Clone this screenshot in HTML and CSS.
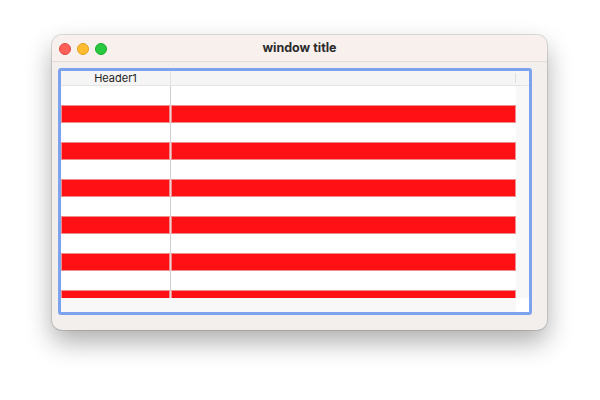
FILE: index.html
```html
<!DOCTYPE html>
<html>
<head>
<meta charset="utf-8">
<link rel="stylesheet" href="styles.css">
</head>
<body>
<div class="window">
  <div class="titlebar">
    <div class="lights">
      <span class="light red"></span>
      <span class="light yellow"></span>
      <span class="light green"></span>
    </div>
    <div class="title">window title</div>
    <div></div>
  </div>
  <div class="content">
    <div class="ring">
      <div class="scroll">
        <div class="header">
          <div class="hcell c1">Header1</div>
          <div class="hcell c2"></div>
          <div class="hcell c3"></div>
        </div>
        <div class="body">
          <div class="row"><div class="cell c1"></div><div class="cell c2"></div></div>
          <div class="row hot"><div class="cell c1"></div><div class="cell c2"></div></div>
          <div class="row"><div class="cell c1"></div><div class="cell c2"></div></div>
          <div class="row hot"><div class="cell c1"></div><div class="cell c2"></div></div>
          <div class="row"><div class="cell c1"></div><div class="cell c2"></div></div>
          <div class="row hot"><div class="cell c1"></div><div class="cell c2"></div></div>
          <div class="row"><div class="cell c1"></div><div class="cell c2"></div></div>
          <div class="row hot"><div class="cell c1"></div><div class="cell c2"></div></div>
          <div class="row"><div class="cell c1"></div><div class="cell c2"></div></div>
          <div class="row hot"><div class="cell c1"></div><div class="cell c2"></div></div>
          <div class="row"><div class="cell c1"></div><div class="cell c2"></div></div>
          <div class="row hot"><div class="cell c1"></div><div class="cell c2"></div></div>
        </div>
        <div class="vscroll"></div>
        <div class="hscroll"></div>
        <div class="corner"></div>
      </div>
    </div>
  </div>
</div>
</body>
</html>
```

FILE: styles.css
```css
html, body {
  margin: 0;
  padding: 0;
  background: #ffffff;
}

body {
  box-sizing: border-box;
  min-height: 400px;
  padding: 35px 0 0 52px;
  font-family: "Inter", "Liberation Sans", sans-serif;
}

.window {
  width: 495px;
  height: 295px;
  border-radius: 10px;
  background: #f3efec;
  box-shadow: 0 12px 26px rgba(0, 0, 0, 0.32), 0 0 0 1px rgba(0, 0, 0, 0.12);
  overflow: hidden;
  display: flex;
  flex-direction: column;
}

.titlebar {
  height: 26px;
  flex: none;
  background: #f7f0ed;
  border-bottom: 1px solid #e3dcd8;
  display: grid;
  grid-template-columns: 1fr auto 1fr;
  align-items: center;
}

.lights {
  display: flex;
  gap: 6px;
  padding-left: 7px;
  padding-top: 1px;
}

.light {
  width: 12px;
  height: 12px;
  border-radius: 50%;
  box-sizing: border-box;
}

.light.red { background: #fe5f57; border: 0.5px solid #e2463f; }
.light.yellow { background: #febc2e; border: 0.5px solid #dfa023; }
.light.green { background: #28c840; border: 0.5px solid #1aab29; }

.title {
  font-size: 12.5px;
  font-weight: 700;
  color: #2b2b2b;
  margin-top: -2px;
}

.content {
  flex: 1;
  min-height: 0;
  padding: 6px 15px 15px 6px;
  display: flex;
}

.ring {
  flex: 1;
  min-height: 0;
  border: 3px solid #7ea3ee;
  border-radius: 3px;
  display: flex;
}

.scroll {
  flex: 1;
  min-height: 0;
  display: grid;
  grid-template-columns: minmax(0, 1fr) 13px;
  grid-template-rows: 15px minmax(0, 1fr) 14px;
  background: #ffffff;
}

.header {
  grid-column: 1 / 3;
  display: flex;
  background: #f5f5f5;
  border-bottom: 1px solid #e4e4e4;
  font-size: 11px;
  color: #222;
}

.hcell {
  box-sizing: border-box;
  display: flex;
  align-items: center;
  justify-content: center;
  height: 14px;
}

.hcell.c1 {
  width: 110px;
  border-right: 1px solid #e2e2e2;
}

.hcell.c2 {
  flex: 1;
  border-right: 1px solid #dddddd;
  height: 10px;
  margin-top: 2px;
}

.hcell.c3 {
  width: 13px;
}

.body {
  overflow: hidden;
  min-height: 0;
  background: #ffffff;
}

.row {
  height: 18.5px;
  display: flex;
}

.cell {
  box-sizing: border-box;
  height: 100%;
}

.cell.c1 {
  width: 110px;
  border-right: 1px solid #cfcfcf;
}

.cell.c2 {
  flex: 1;
}

.row.hot .cell {
  background: #fe1014;
  box-shadow: inset 0 0 0 1px #ef8c8c;
}

.row.hot .cell.c1 {
  border-right-color: #e8d4d4;
}

.vscroll {
  background: #f8f8f8;
}

.hscroll {
  background: #f8f8f8;
}

.corner {
  background: #ffffff;
}
```
